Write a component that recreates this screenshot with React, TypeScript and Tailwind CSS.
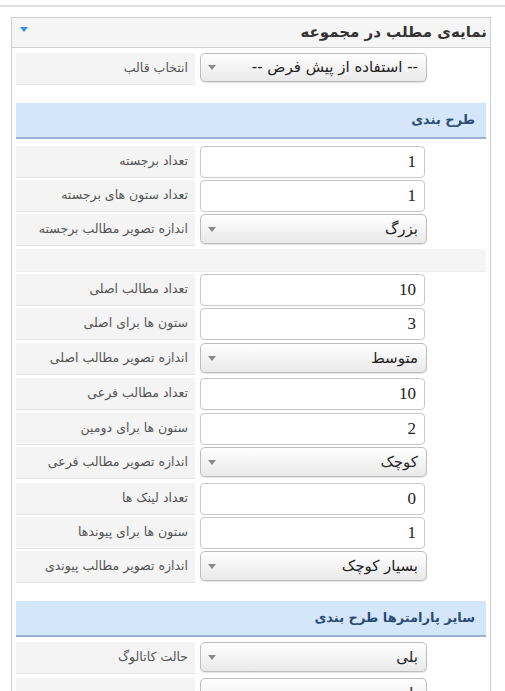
import React from 'react';

type Row = { label: string; kind: 'input' | 'select'; value: string; mb: string };

const groupA: Row[] = [
  { label: 'تعداد برجسته', kind: 'input', value: '1', mb: 'mb-[2px]' },
  { label: 'تعداد ستون های برجسته', kind: 'input', value: '1', mb: 'mb-[2px]' },
  { label: 'اندازه تصویر مطالب برجسته', kind: 'select', value: 'بزرگ', mb: 'mb-[3px]' },
];

const groupB: Row[] = [
  { label: 'تعداد مطالب اصلی', kind: 'input', value: '10', mb: 'mb-[2px]' },
  { label: 'ستون ها برای اصلی', kind: 'input', value: '3', mb: 'mb-[3px]' },
  { label: 'اندازه تصویر مطالب اصلی', kind: 'select', value: 'متوسط', mb: 'mb-[3px]' },
  { label: 'تعداد مطالب فرعی', kind: 'input', value: '10', mb: 'mb-[3px]' },
  { label: 'ستون ها برای دومین', kind: 'input', value: '2', mb: 'mb-[2px]' },
  { label: 'اندازه تصویر مطالب فرعی', kind: 'select', value: 'کوچک', mb: 'mb-[4px]' },
  { label: 'تعداد لینک ها', kind: 'input', value: '0', mb: 'mb-[2px]' },
  { label: 'ستون ها برای پیوندها', kind: 'input', value: '1', mb: 'mb-[2px]' },
  { label: 'اندازه تصویر مطالب پیوندی', kind: 'select', value: 'بسیار کوچک', mb: 'mb-[18px]' },
];

const font = { fontFamily: '"DejaVu Sans", Tahoma, sans-serif' };

const Caret = ({ color }: { color: string }) => (
  <span className={`w-0 h-0 border-l-[4px] border-r-[4px] border-t-[5px] border-l-transparent border-r-transparent ${color}`} />
);

const SelectBox = ({ value, h = 'h-[30px]' }: { value: string; h?: string }) => (
  <div
    className={`w-[227px] ${h} rounded-[5px] border border-[#bdbdbd] bg-gradient-to-b from-white to-[#e9e9e9] shadow-[0_1px_1px_rgba(0,0,0,0.12)] flex items-center justify-between pl-[7px] pr-[8px]`}
  >
    <Caret color="border-t-[#8a8a8a]" />
    <span dir="rtl" className="text-[15px] text-[#222]">{value}</span>
  </div>
);

const InputBox = ({ value }: { value: string }) => (
  <div className="w-[225px] h-[32px] rounded-[4px] border border-[#c8c8c8] bg-white flex items-center justify-end pr-[8px]">
    <span className="text-[17px] text-[#222]" style={{ fontFamily: '"Liberation Serif", serif' }}>
      {value}
    </span>
  </div>
);

const Label = ({ text }: { text: string }) => (
  <div className="w-[179px] h-[32px] bg-[#f4f4f4] border-b border-[#e6e6e6] flex items-center justify-end pr-[7px]">
    <span dir="rtl" className="text-[12.5px] text-[#555]">{text}</span>
  </div>
);

const FieldRow = ({ row }: { row: Row }) => (
  <div className={`flex items-start gap-[5px] ${row.mb}`}>
    <Label text={row.label} />
    {row.kind === 'input' ? <InputBox value={row.value} /> : <SelectBox value={row.value} />}
  </div>
);

const SectionHeader = ({ title }: { title: string }) => (
  <div className="h-[36px] bg-[#d4e6fa] border-b-2 border-[#98b2d4] flex items-center justify-end pr-[11px]">
    <span dir="rtl" className="text-[13px] font-bold text-[#2c4c74]">{title}</span>
  </div>
);

export default function App() {
  return (
    <div className="w-[505px] h-[691px] bg-white overflow-hidden" style={font}>
      <div className="h-[2px] bg-[#dedede] mt-[5px]" />
      <div className="mt-[10px] ml-[11px] w-[480px] border border-b-0 border-[#cfcfcf]">
        <div className="h-[30px] bg-[#f5f5f5] border-b border-[#cfcfcf] flex items-center justify-between pl-[8px] pr-[3px]">
          <span className="-mt-[6px] flex">
            <Caret color="border-t-[#3b8ee6]" />
          </span>
          <span dir="rtl" className="text-[15px] font-bold text-[#333]">نمایه‌ی مطلب در مجموعه</span>
        </div>
        <div className="px-[4px] pt-[5px]">
          <div className="flex items-start gap-[5px] mb-[18px]">
            <Label text="انتخاب قالب" />
            <SelectBox value="-- استفاده از پیش فرض --" h="h-[29px]" />
          </div>

          <SectionHeader title="طرح بندی" />
          <div className="mt-[7px]">
            {groupA.map((r) => (
              <FieldRow key={r.label} row={r} />
            ))}
          </div>
          <div className="h-[23px] bg-[#f5f5f5] border-b border-[#ececec] mb-[2px]" />
          {groupB.map((r) => (
            <FieldRow key={r.label} row={r} />
          ))}

          <SectionHeader title="سایر پارامترها طرح بندی" />
          <div className="mt-[5px]">
            <FieldRow row={{ label: 'حالت کاتالوگ', kind: 'select', value: 'بلی', mb: 'mb-[4px]' }} />
            <div className="flex items-start gap-[5px]">
              <div className="w-[179px] h-[32px] bg-[#f4f4f4]" />
              <SelectBox value="بلی" />
            </div>
          </div>
        </div>
      </div>
    </div>
  );
}
